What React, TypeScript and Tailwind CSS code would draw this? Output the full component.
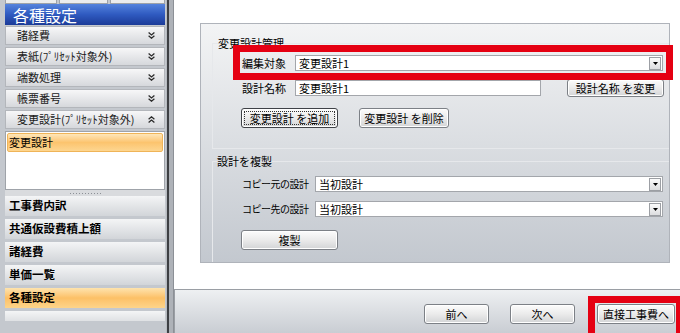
import React from "react";

const sideRows = [
  { name: "諸経費", up: false },
  { name: "表紙(ﾌﾟﾘｾｯﾄ対象外)", up: false },
  { name: "端数処理", up: false },
  { name: "帳票番号", up: false },
  { name: "変更設計(ﾌﾟﾘｾｯﾄ対象外)", up: true },
];

const navRows = ["工事費内訳", "共通仮設費積上額", "諸経費", "単価一覧", "各種設定"];

function Chevrons({ up }: { up?: boolean }) {
  return (
    <svg width="7" height="7" viewBox="0 0 7 7" className={up ? "rotate-180" : ""}>
      <path d="M0.6 0.6 L3.5 3 L6.4 0.6 M0.6 3.8 L3.5 6.2 L6.4 3.8" stroke="#2a2a2a" strokeWidth="1.3" fill="none" />
    </svg>
  );
}

function DropBtn() {
  return (
    <span className="mr-[1px] flex h-[13px] w-[12px] items-center justify-center border border-[#9c9fa4] bg-gradient-to-b from-[#fbfbfb] to-[#dcdddf]">
      <svg width="5" height="3" viewBox="0 0 5 3">
        <path d="M0 0h5L2.5 3z" fill="#000" />
      </svg>
    </span>
  );
}

function Select({ value, className }: { value: string; className: string }) {
  return (
    <div className={`flex h-[16px] items-center justify-between border border-[#a3a6ab] bg-white ${className}`}>
      <span className="pl-[3px] leading-none">{value}</span>
      <DropBtn />
    </div>
  );
}

function Btn({
  children,
  className,
  focused,
}: {
  children: React.ReactNode;
  className: string;
  focused?: boolean;
}) {
  return (
    <div
      className={`flex items-center justify-center rounded-[3px] border bg-gradient-to-b from-[#fcfcfc] via-[#ebebeb] to-[#d3d4d6] shadow-[inset_0_0_0_1px_#ffffff] ${
        focused ? "border-[#3f4247] p-[2px]" : "border-[#7c8086]"
      } ${className}`}
    >
      {focused ? (
        <span className="flex h-full w-full items-center justify-center border border-dotted border-[#333]">
          {children}
        </span>
      ) : (
        children
      )}
    </div>
  );
}

export default function App() {
  return (
    <div className="relative flex h-[333px] w-[680px] overflow-hidden bg-white font-['Noto_Sans_CJK_JP',sans-serif] text-[11px] text-black">
      {/* Sidebar */}
      <aside className="flex w-[166px] shrink-0 flex-col bg-[#c4c8ce] pl-[5px] pr-[1px]">
        <div className="flex h-[4px] gap-[2px]">
          <div className="w-[52px] border-x border-b border-[#9ea2a8] bg-[#eceded]" />
          <div className="w-[49px] border-x border-b border-[#9ea2a8] bg-[#eceded]" />
          <div className="flex-1 border-x border-b border-[#9ea2a8] bg-[#eceded]" />
        </div>
        <div className="flex h-[21px] items-center bg-gradient-to-b from-[#5583dd] via-[#2f5ac0] to-[#1c3b98] pl-[8px] text-[16px] leading-none text-white">
          各種設定
        </div>
        {sideRows.map((r, i) => (
          <div
            key={r.name}
            className={`flex h-[19px] items-center justify-between border border-[#b3b6bb] bg-gradient-to-b from-[#f7f7f8] to-[#d6d8dc] pl-[11px] pr-[9px] text-[#1a1a1a] ${
              i === 0 ? "mt-[1px]" : "mt-[2px]"
            }`}
          >
            <span className="leading-none">{r.name}</span>
            <Chevrons up={r.up} />
          </div>
        ))}
        <div className="mt-[2px] h-[59px] border border-[#9fa3a9] bg-white p-[1px]">
          <div className="flex h-[19px] items-center rounded-[2px] border border-[#efb458] bg-gradient-to-b from-[#fee6b8] via-[#fcc46e] to-[#fdd690] pl-[1px] leading-none">
            変更設計
          </div>
        </div>
        <div className="flex h-[6px] items-center justify-center gap-[2px] bg-[#d9dbde]">
          {Array.from({ length: 11 }).map((_, i) => (
            <span key={i} className="h-[1px] w-[1px] bg-[#8c9096]" />
          ))}
        </div>
        {navRows.map((n, i) => (
          <div
            key={n}
            className={`flex h-[20px] items-center pl-[4px] text-[11.5px] font-bold leading-none ${
              i === 0 ? "mt-0" : "mt-[3px]"
            } ${
              n === "各種設定"
                ? "bg-gradient-to-b from-[#fee3ad] via-[#fcc066] to-[#fdd48a]"
                : "bg-gradient-to-b from-[#f4f5f6] to-[#d2d5d9]"
            }`}
          >
            {n}
          </div>
        ))}
        <div className="mt-[3px] h-[10px] bg-gradient-to-b from-[#f4f5f6] to-[#dfe1e4]" />
      </aside>

      {/* Splitter */}
      <div className="flex w-[8px] shrink-0">
        <div className="w-[1px] bg-[#b7bbc0]" />
        <div className="w-[2px] bg-[#3d3f43]" />
        <div className="w-[4px] bg-[#aeb2b8]" />
        <div className="w-[1px] bg-[#8c9096]" />
      </div>

      {/* Main */}
      <div className="flex flex-1 flex-col">
        <div className="h-[289px] bg-white pl-[26px] pt-[23px]">
          <div className="flex h-[240px] w-[470px] flex-col border border-[#afb3ba] bg-gradient-to-b from-[#f3f4f5] to-[#c3c8cf]">
            {/* 変更設計管理 */}
            <div className="ml-[11px] mt-[19px] flex h-[106px] flex-col border-y border-l border-[#e6e8eb]">
              <span className="-mt-[7px] ml-[5px] leading-[13px]">変更設計管理</span>
              <div className="mt-[5px] flex h-[16px] items-center pl-[29px]">
                <span className="w-[53px] shrink-0 leading-none">編集対象</span>
                <Select value="変更設計1" className="w-[368px]" />
              </div>
              <div className="mt-[8px] flex h-[18px] items-center pl-[29px]">
                <span className="w-[53px] shrink-0 leading-none">設計名称</span>
                <div className="flex h-[16px] w-[246px] items-center border border-[#a3a6ab] bg-white pl-[3px] leading-none">
                  変更設計1
                </div>
                <Btn className="ml-[26px] h-[18px] w-[97px]">設計名称 を変更</Btn>
              </div>
              <div className="mt-[11px] flex pl-[28px]">
                <Btn focused className="h-[20px] w-[97px]">変更設計 を追加</Btn>
                <Btn className="ml-[21px] h-[20px] w-[90px]">変更設計 を削除</Btn>
              </div>
            </div>

            {/* 設計を複製 */}
            <div className="ml-[11px] mt-[12px] flex flex-1 flex-col border-l border-t border-[#e6e8eb]">
              <span className="-mt-[7px] ml-[4px] leading-[13px]">設計を複製</span>
              <div className="mt-[8px] flex h-[16px] items-center pl-[29px]">
                <span className="w-[73px] shrink-0 whitespace-nowrap text-[10px] leading-none tracking-[-0.5px]">コピー元の設計</span>
                <Select value="当初設計" className="w-[348px]" />
              </div>
              <div className="mt-[9px] flex h-[16px] items-center pl-[29px]">
                <span className="w-[73px] shrink-0 whitespace-nowrap text-[10px] leading-none tracking-[-0.5px]">コピー先の設計</span>
                <Select value="当初設計" className="w-[348px]" />
              </div>
              <div className="mt-[13px] flex pl-[28px]">
                <Btn className="h-[20px] w-[97px]">複製</Btn>
              </div>
            </div>
          </div>
        </div>

        {/* Footer */}
        <div className="flex h-[44px] items-start justify-end border-l border-t border-[#9a9ea4] bg-gradient-to-b from-[#eef0f2] to-[#c9cdd3] pr-[5px] pt-[14px]">
          <Btn className="h-[20px] w-[65px]">前へ</Btn>
          <Btn className="ml-[21px] h-[20px] w-[65px]">次へ</Btn>
          <Btn className="ml-[22px] h-[20px] w-[78px]">直接工事費へ</Btn>
        </div>
      </div>

      {/* Red annotation boxes */}
      <div className="pointer-events-none absolute left-[233px] top-[45px] h-[35px] w-[440px] border-[7px] border-[#e50012]" />
      <div className="pointer-events-none absolute left-[588px] top-[296px] h-[45px] w-[95px] border-[7px] border-[#e50012]" />
    </div>
  );
}
